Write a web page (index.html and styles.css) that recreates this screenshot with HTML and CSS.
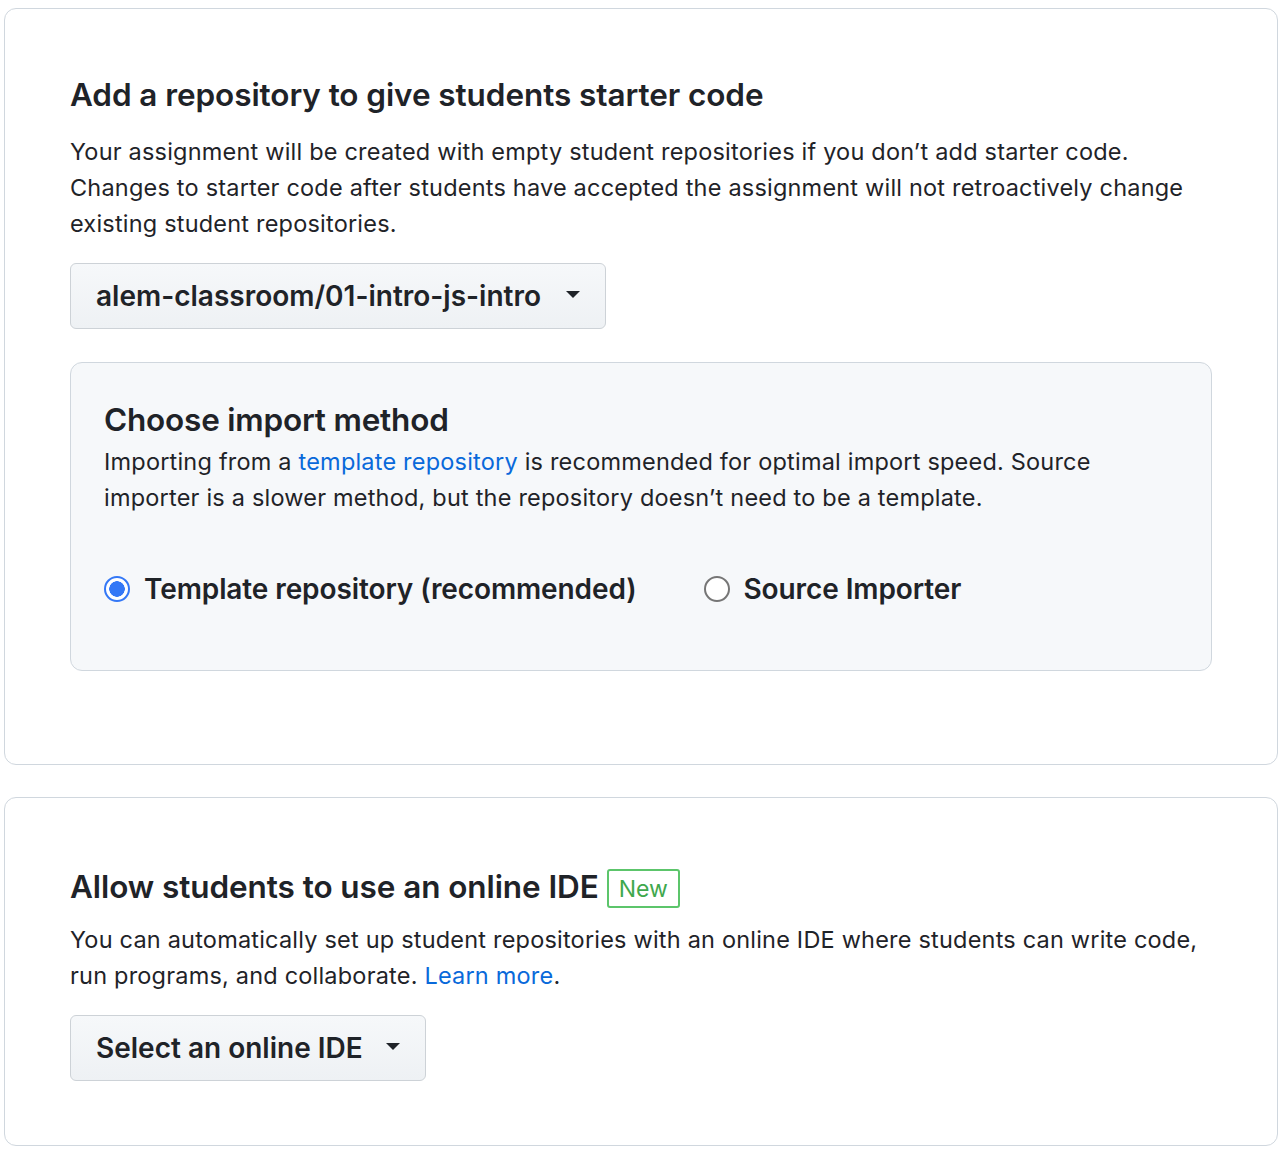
FILE: index.html
```html
<!DOCTYPE html>
<html lang="en">
<head>
<meta charset="utf-8">
<title>Assignment starter code</title>
<link rel="stylesheet" href="styles.css">
</head>
<body>
<main class="page">
  <section class="card">
    <h2 class="card-title">Add a repository to give students starter code</h2>
    <p class="desc">Your assignment will be created with empty student repositories if you don’t add starter code. Changes to starter code after students have accepted the assignment will not retroactively change existing student repositories.</p>
    <button class="btn select-btn repo-btn" type="button">
      <span>alem-classroom/01-intro-js-intro</span>
      <span class="caret"></span>
    </button>
    <div class="import-box">
      <h3 class="import-title">Choose import method</h3>
      <p class="desc import-desc">Importing from a <a href="#" class="link">template repository</a> is recommended for optimal import speed. Source importer is a slower method, but the repository doesn’t need to be a template.</p>
      <div class="radios">
        <label class="radio-label">
          <span class="radio checked"></span>
          <span>Template repository (recommended)</span>
        </label>
        <label class="radio-label">
          <span class="radio"></span>
          <span>Source Importer</span>
        </label>
      </div>
    </div>
  </section>

  <section class="card card-ide">
    <h2 class="card-title">Allow students to use an online IDE <span class="badge">New</span></h2>
    <p class="desc">You can automatically set up student repositories with an online IDE where students can write code, run programs, and collaborate. <a href="#" class="link">Learn more</a>.</p>
    <button class="btn select-btn ide-btn" type="button">
      <span>Select an online IDE</span>
      <span class="caret"></span>
    </button>
  </section>
</main>
</body>
</html>
```

FILE: styles.css
```css
* { box-sizing: border-box; }

html, body {
  margin: 0;
  padding: 0;
  background: #ffffff;
}

body {
  font-family: Inter, "Noto Sans", "Liberation Sans", sans-serif;
  color: #1f2328;
}

.page {
  padding: 8px 4px 8px 4px;
  display: flex;
  flex-direction: column;
  gap: 32px;
  width: 1282px;
}

.card {
  border: 1.5px solid #d0d7de;
  border-radius: 12px;
  padding: 66px 64px 93px 65px;
  display: flex;
  flex-direction: column;
  align-items: flex-start;
}

.card-ide {
  padding-top: 69px;
  padding-bottom: 64px;
}

.card-title {
  margin: 0;
  height: 40px;
  font-size: 31.5px;
  line-height: 40px;
  font-weight: 600;
  letter-spacing: -0.08px;
  display: flex;
  align-items: center;
  gap: 8px;
}

.desc {
  margin: 19px 0 0 0;
  max-width: 1142px;
  font-size: 23.5px;
  line-height: 36px;
  font-weight: 400;
  letter-spacing: 0.2px;
}

.card-ide .desc {
  margin-top: 15px;
}

.link {
  color: #0969da;
  text-decoration: none;
}

.btn {
  font-family: inherit;
  margin-top: 21px;
  height: 66px;
  display: flex;
  align-items: center;
  gap: 20px;
  padding: 0 24px 0 25px;
  border: 1.5px solid #cdd2d7;
  border-radius: 6px;
  background: linear-gradient(#f6f8fa, #eef1f4);
  color: #1f2328;
  font-size: 28px;
  font-weight: 600;
  letter-spacing: 0;
}

.repo-btn { width: 536px; justify-content: space-between; }
.ide-btn { width: 356px; justify-content: space-between; }

.caret {
  width: 0;
  height: 0;
  border-left: 7.5px solid transparent;
  border-right: 7.5px solid transparent;
  border-top: 7.5px solid #1f2328;
  margin-right: 1px;
  margin-top: -4px;
}

.import-box {
  margin-top: 33px;
  width: 1142px;
  background: #f6f8fa;
  border: 1.5px solid #d0d7de;
  border-radius: 12px;
  padding: 37px 32px 63px 33px;
}

.import-title {
  margin: 0;
  font-size: 31.5px;
  line-height: 40px;
  font-weight: 600;
  letter-spacing: -0.2px;
}

.import-desc {
  margin-top: 4px;
}

.radios {
  margin-top: 55px;
  display: flex;
  align-items: center;
  gap: 67px;
}

.radio-label {
  display: flex;
  align-items: center;
  gap: 14px;
  font-size: 28px;
  line-height: 36px;
  font-weight: 600;
  letter-spacing: -0.1px;
}

.radio {
  width: 26px;
  height: 26px;
  border-radius: 50%;
  border: 2px solid #767676;
  background: #ffffff;
  flex: none;
}

.radio.checked {
  border: 2.5px solid #3478f6;
  background: radial-gradient(circle, #3478f6 0 7.5px, #ffffff 8px);
}

.badge {
  display: inline-flex;
  align-items: center;
  height: 39px;
  padding: 0 10px;
  border: 2px solid #5cc56b;
  border-radius: 3px;
  color: #3fa84d;
  font-size: 23px;
  font-weight: 400;
  letter-spacing: 0;
  margin-top: 3px;
}
```
